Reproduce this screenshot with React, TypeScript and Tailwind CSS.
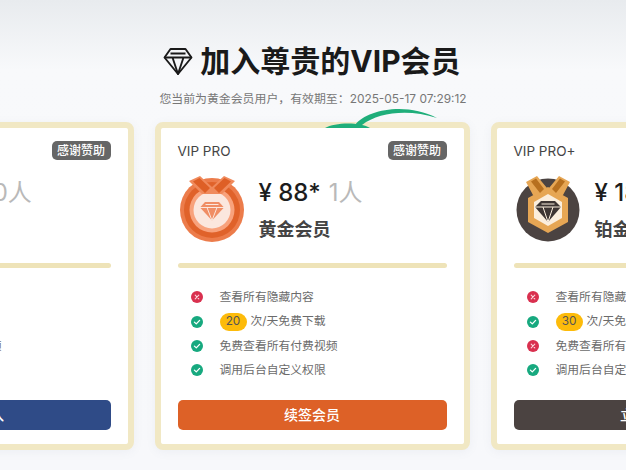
import React from "react"

const font = "[font-family:Inter,'Noto_Sans_CJK_SC',sans-serif]"

const OrangeMedal = () => (
  <svg width="64" height="67" viewBox="0 0 64 67" fill="none">
    <circle cx="32" cy="35" r="32" fill="#ec7c4b" />
    <circle cx="32" cy="35" r="28" fill="#e0622a" />
    <circle cx="32" cy="35" r="22.5" fill="#f8a27c" />
    <circle cx="32" cy="35" r="18.5" fill="#fbe7de" />
    <path d="M9 6 L20 1 L32 12 L44 1 L55 6 L42 19 L22 19 Z" fill="#f08a5c" />
    <path d="M13 6.5 L19.5 3 L30 13 L25 18 Z M51 6.5 L44.5 3 L34 13 L39 18 Z" fill="#de5f26" />
    <path d="M25 27 H39 L44 32.5 L32 45.5 L20 32.5 Z" fill="#f08d64" />
    <path d="M20 32.5 H44 M27 32.5 L32 45.5 L37 32.5 M25.5 29.5 H38.5" stroke="#fbe7de" strokeWidth="1" />
  </svg>
)

const DarkMedal = () => (
  <svg width="64" height="67" viewBox="0 0 64 67" fill="none">
    <circle cx="32" cy="35" r="31.5" fill="#4b4341" />
    <path d="M32 12 L52 23 V47 L32 58 L12 47 V23 Z" fill="#e6a654" />
    <path d="M32 19 L46 27 V43 L32 51 L18 43 V27 Z" fill="#fbeedd" />
    <path d="M10 7 L21 1 L31 13 L24 21 L17 20 Z M54 7 L43 1 L33 13 L40 21 L47 20 Z" fill="#e6a654" />
    <path d="M15 6.5 L20 3.5 L28 14 L24 18 Z M49 6.5 L44 3.5 L36 14 L40 18 Z" fill="#b7701f" />
    <path d="M25 26 H39 L45 32 L32 47 L19 32 Z" fill="#3d3533" />
    <path d="M19 32 H45 M27 32 L32 47 L37 32 M25.5 29 H38.5" stroke="#fbeedd" strokeWidth="1" />
  </svg>
)

const CheckIcon = ({ ok }: { ok: boolean }) => (
  <svg width="12" height="12" viewBox="0 0 12 12" fill="none" className="shrink-0">
    <circle cx="6" cy="6" r="6" fill={ok ? "#17a97f" : "#d9304f"} />
    {ok ? (
      <path d="M3.4 6.1 L5.3 7.9 L8.6 4.4" stroke="#fff" strokeWidth="1.3" strokeLinecap="round" strokeLinejoin="round" />
    ) : (
      <path d="M4.2 4.2 L7.8 7.8 M7.8 4.2 L4.2 7.8" stroke="#fbd5dc" strokeWidth="1.1" strokeLinecap="round" />
    )}
  </svg>
)

type Plan = {
  name: string
  price: string
  people: string
  level: string
  downloads: number
  hidden: boolean
  video: boolean
  button: string
  buttonClass: string
  medal: React.ReactNode
  swoosh?: boolean
}

const plans: Plan[] = [
  {
    name: "VIP",
    price: "¥ 88*",
    people: "0人",
    level: "白银会员",
    downloads: 10,
    hidden: true,
    video: true,
    button: "立即加入",
    buttonClass: "bg-[#2f4b87]",
    medal: <OrangeMedal />,
  },
  {
    name: "VIP PRO",
    price: "¥ 88*",
    people: "1人",
    level: "黄金会员",
    downloads: 20,
    hidden: false,
    video: true,
    button: "续签会员",
    buttonClass: "bg-[#dd6127]",
    medal: <OrangeMedal />,
    swoosh: true,
  },
  {
    name: "VIP PRO+",
    price: "¥ 188*",
    people: "0人",
    level: "铂金会员",
    downloads: 30,
    hidden: false,
    video: false,
    button: "立即加入",
    buttonClass: "bg-[#4b4341]",
    medal: <DarkMedal />,
  },
]

const Row = ({ ok, children }: { ok: boolean; children: React.ReactNode }) => (
  <li className="flex h-[24.4px] items-center pl-[13px]">
    <CheckIcon ok={ok} />
    <div className="ml-[17px] flex items-center whitespace-nowrap pt-px text-[11.8px] text-[#6b6b6b]">{children}</div>
  </li>
)

const PlanCard = ({ plan }: { plan: Plan }) => (
  <div className="relative h-[328px] w-[315px] shrink-0 rounded-lg border-[6px] border-[#f1e8c4] bg-white shadow-[0_2px_10px_rgba(120,130,150,0.08)]">
    {plan.swoosh && (
      <svg width="130" height="30" viewBox="0 0 130 30" fill="none" className="absolute -top-[24px] left-[158px]">
        <path d="M6 24 C16 18 42 18 51 24 Z" fill="#1fae7a" />
        <path d="M36 21 C48 5 88 -2 118 14 C90 5 60 8 43 21 Z" fill="#1fae7a" />
      </svg>
    )}
    <div className="relative flex h-full flex-col rounded bg-white px-[17px] pt-[13px]">
      <div className="flex h-[19px] items-center justify-between">
        <span className="pt-px text-[13.5px] text-[#444]">{plan.name}</span>
        <span className="flex h-[19px] w-[59px] items-center justify-center rounded-[5px] bg-[#666] pt-px text-xs font-medium text-white">
          感谢赞助
        </span>
      </div>
      <div className="mt-[15px] flex h-[67px] items-start pl-[2px]">
        {plan.medal}
        <div className="ml-[15px] flex flex-col">
          <div className="flex h-[36px] items-center whitespace-nowrap text-2xl font-medium text-[#1c1c1c]">
            {plan.price}
            <span className="ml-[8px] font-normal text-[#b9b9b9]">{plan.people}</span>
          </div>
          <div className="mt-[6px] text-lg leading-[26px] font-semibold text-[#444]">{plan.level}</div>
        </div>
      </div>
      <div className="mt-[21px] h-[5px] rounded-full bg-[#eee3b8]" />
      <ul className="mt-[17px]">
        <Row ok={plan.hidden}>查看所有隐藏内容</Row>
        <Row ok>
          <span className="mr-1 flex h-[18px] w-[27px] items-center justify-center rounded-full bg-[#fdbb0a] text-[#555]">
            {plan.downloads}
          </span>
          次/天免费下载
        </Row>
        <Row ok={plan.video}>免费查看所有付费视频</Row>
        <Row ok>调用后台自定义权限</Row>
      </ul>
      <button className={`mt-[17px] h-[30px] w-full rounded-[5px] text-sm font-medium text-white ${plan.buttonClass}`}>
        {plan.button}
      </button>
    </div>
  </div>
)

export default function App() {
  return (
    <div className={`h-[470px] w-[626px] overflow-hidden bg-gradient-to-b from-[#e8ebee] via-[#f8f9fb] via-[15%] to-[#f7f8fb] ${font}`}>
      <div className="flex h-[122px] flex-col items-center pt-[41px]">
        <h1 className="flex h-10 items-center pr-[2px] text-[30px] font-bold text-[#1a1a1a]">
          <svg width="30" height="29" viewBox="0 0 30 29" fill="none" className="mr-[7px]" stroke="#1a1a1a" strokeWidth="1.9" strokeLinejoin="round">
            <path d="M7.5 2 H22.5 L28.5 10.5 L15 27 L1.5 10.5 Z" />
            <path d="M1.5 10.5 H28.5 M9.5 10.5 L15 27 L20.5 10.5 M7.5 6.5 H22.5" />
          </svg>
          加入尊贵的VIP会员
        </h1>
        <p className="mt-[8px] text-[11.9px] leading-5 text-[#777]">您当前为黄金会员用户，有效期至：2025-05-17 07:29:12</p>
      </div>
      <div className="-ml-[1px] flex w-[626px] justify-center gap-[21px]">
        {plans.map((plan) => (
          <PlanCard key={plan.name} plan={plan} />
        ))}
      </div>
    </div>
  )
}
